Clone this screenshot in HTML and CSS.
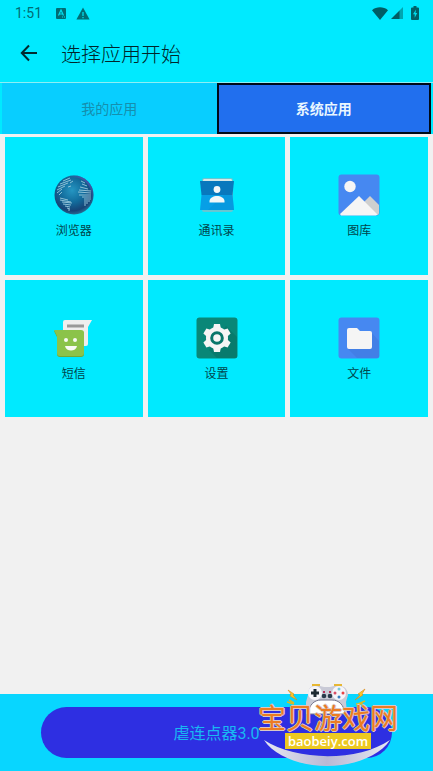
FILE: index.html
```html
<!DOCTYPE html>
<html lang="zh-CN">
<head>
    <meta charset="UTF-8">
    <meta name="viewport" content="width=device-width, initial-scale=1.0">
    <title>选择应用开始</title>
    <link rel="stylesheet" href="styles.css">
</head>
<body>
    <header class="header">
        <div class="status-bar">
            <span class="time">1:51</span>
            <svg class="status-icon" width="12" height="12" viewBox="0 0 12 12">
                <rect x="1" y="1" width="10" height="11" rx="1" fill="#006d75"/>
                <path d="M3.5 8.500L6 3l2.500 5.500M4.300 7h3.400" fill="none" stroke="#00dcec" stroke-width="1.200"/>
                <path d="M7 10h1M9 10h1" stroke="#00dcec"/>
            </svg>
            <svg class="status-icon" width="14" height="13" viewBox="0 0 14 13">
                <path d="M7 0.500L13.600 12.500H0.400z" fill="#006d75"/>
                <path d="M7 5v4M7 10v1.300" stroke="#00dcec" stroke-width="1.300"/>
            </svg>
            <div class="status-right">
                <svg width="16" height="13" viewBox="0 0 16 13">
                    <path d="M0 3.200C4.500-.6 11.500-.6 16 3.200L8 13z" fill="#005d64"/>
                </svg>
                <svg width="12" height="12" viewBox="0 0 12 12">
                    <path d="M12 0v12H8V4z" fill="#00a5b0"/>
                    <path d="M8.500 3.500V12H0z" fill="#005d64"/>
                </svg>
                <svg class="battery" width="8" height="14" viewBox="0 0 8 14">
                    <path d="M2.500 0h3v1.500H7q1 0 1 1V13q0 1-1 1H1q-1 0-1-1V2.500q0-1 1-1h1.500z" fill="#006067"/>
                    <path d="M5 3.500L2 8.300h1.700v3.500L6.200 7H4.500z" fill="#00dcec"/>
                </svg>
            </div>
        </div>
        <div class="toolbar">
            <button class="back-btn" type="button" aria-label="返回">
                <svg width="18" height="18" viewBox="0 0 18 18">
                    <path d="M9 1.500L1.800 9 9 16.500M1.800 9H17" fill="none" stroke="#002b30" stroke-width="2"/>
                </svg>
            </button>
            <h1>选择应用开始</h1>
        </div>
    </header>

    <nav class="tabs">
        <button class="tab" type="button">我的应用</button>
        <button class="tab active" type="button">系统应用</button>
    </nav>

    <main class="apps">
        <button class="app" type="button">
            <svg class="app-icon" viewBox="0 0 42 42">
                <defs>
                    <radialGradient id="globe" cx="0.45" cy="0.38" r="0.62">
                        <stop offset="0" stop-color="#2596c2"/>
                        <stop offset="0.5" stop-color="#126b9b"/>
                        <stop offset="0.85" stop-color="#174476"/>
                        <stop offset="1" stop-color="#266b93"/>
                    </radialGradient>
                    <linearGradient id="globe-edge" x1="0" y1="1" x2="1" y2="0">
                        <stop offset="0.6" stop-color="#15739d" stop-opacity="0"/>
                        <stop offset="1" stop-color="#8149cf"/>
                    </linearGradient>
                </defs>
                <circle cx="21" cy="21" r="19.500" fill="url(#globe)"/>
                <circle cx="21" cy="21" r="18.500" fill="none" stroke="url(#globe-edge)" stroke-width="2"/>
                <g fill="none" stroke="#9bc9dc" stroke-width="0.900">
                    <path d="M10 7l7-3M7 10l11-4M5 13l10-4M4 16l8-4M4 19l5-4M6 21l3-3M17 9l3-2M15 13l3-1"/>
                    <path d="M7 24l8 2M7 26l11 2M9 28l10 1M10 30l8 1M12 32l5 1M14 34l3 1M15 36l2 0"/>
                    <path d="M28 7l4 2M29 10l5 2M27 13l8 2M26 16l12 1M25 18l13 1M26 21l12 0M29 23l9 0M31 25l7 0M31 27l6 0M31 29l4 0M31 31l2 0"/>
                </g>
            </svg>
            <span>浏览器</span>
        </button>
        <button class="app" type="button">
            <svg class="app-icon" viewBox="0 0 42 42">
                <path d="M8 4h27q2 0 2 2v30q0 2-2 2H8q-2 0-2-2V6q0-2 2-2z" fill="#65c7d2"/>
                <path d="M8 5h27q1 0 1 2H7q0-2 1-2z" fill="#d5e8e7"/>
                <path d="M4 7h34l-1.500 14H5.500z" fill="#0878bd"/>
                <path d="M5.500 21h31L38 36H4z" fill="#079fe6"/>
                <path d="M28 21h8.500L38 36H12z" fill="#0793d7" opacity="0.5"/>
                <circle cx="21" cy="15.500" r="3.400" fill="#f3f7f8"/>
                <path d="M13.500 28.500V27c0-3 4-5 7.500-5s7.500 2 7.500 5v1.500z" fill="#f3f7f8"/>
            </svg>
            <span>通讯录</span>
        </button>
        <button class="app" type="button">
            <svg class="app-icon" viewBox="0 0 42 42">
                <rect x="0.500" y="0.500" width="41" height="41" rx="3" fill="#4688f1"/>
                <circle cx="12" cy="12.500" r="5.700" fill="#f5f5f5"/>
                <path d="M20 34l12-12 9 9v8q0 2-2 2H26z" fill="#cfcfcf"/>
                <path d="M2 40l19-18 18.500 18.500-1.500 1H3z" fill="#f5f5f5"/>
            </svg>
            <span>图库</span>
        </button>
        <button class="app" type="button">
            <svg class="app-icon" viewBox="0 0 42 42">
                <path d="M12 3h27l-4 7v17q0 2-2 2H12q-2 0-2-2V5q0-2 2-2z" fill="#eee"/>
                <path d="M14 9h17" stroke="#999" stroke-width="3"/>
                <path d="M1 14h27q3 0 3 3v20q0 3-3 3H7q-3 0-3-3V20z" fill="#70a936"/>
                <path d="M1 13h27q3 0 3 3v20q0 3-3 3H7q-3 0-3-3V19z" fill="#8bc34a"/>
                <circle cx="13" cy="23" r="2" fill="#f8faf5"/>
                <circle cx="22" cy="23" r="2" fill="#f8faf5"/>
                <path d="M12 29h12c-1 6-11 6-12 0z" fill="#f8faf5"/>
            </svg>
            <span>短信</span>
        </button>
        <button class="app" type="button">
            <svg class="app-icon" viewBox="0 0 42 42">
                <rect x="0.500" y="0.500" width="41" height="41" rx="3" fill="#098778"/>
                <path d="M30 9l11 11v19q0 2-2 2H21L13 33z" fill="#087b6d"/>
                <g fill="#f5f5f5">
                    <circle cx="21" cy="21" r="11"/>
                    <path id="tooth" d="M17 12l1-5h6l1 5z"/>
                    <use href="#tooth" transform="rotate(60 21 21)"/>
                    <use href="#tooth" transform="rotate(120 21 21)"/>
                    <use href="#tooth" transform="rotate(180 21 21)"/>
                    <use href="#tooth" transform="rotate(240 21 21)"/>
                    <use href="#tooth" transform="rotate(300 21 21)"/>
                </g>
                <circle cx="21" cy="21" r="5.300" fill="#f5f5f5" stroke="#08766a" stroke-width="3"/>
            </svg>
            <span>设置</span>
        </button>
        <button class="app" type="button">
            <svg class="app-icon" viewBox="0 0 42 42">
                <rect x="0.500" y="0.500" width="41" height="41" rx="3" fill="#4688f1"/>
                <path d="M33 15l8 9v15q0 2-2 2H19L10 32z" fill="#427fe6"/>
                <path d="M11 11h8l3 3h10q2 0 2 2v14q0 2-2 2H11q-2 0-2-2V13q0-2 2-2z" fill="#f5f5f5"/>
            </svg>
            <span>文件</span>
        </button>
    </main>

    <footer class="footer">
        <button class="start-btn" type="button">虐连点器3.0</button>
        <div class="watermark">
            <svg class="watermark-art" viewBox="0 0 140 84">
                <defs>
                    <linearGradient id="smile" x1="0" x2="1">
                        <stop offset="0" stop-color="#e7e8f2"/>
                        <stop offset="0.5" stop-color="#b9b9d5"/>
                        <stop offset="1" stop-color="#e7e8f2"/>
                    </linearGradient>
                </defs>
                <path d="M55 3V1h6v2M77 3V1h6v2" fill="none" stroke="#e7b733" stroke-width="2"/>
                <path d="M55 2h7l4 1h6l4-1h7c5 1 7 5 7 9l-2 7 1 12H48V18l2-7c0-4 1-8 5-9z" fill="#c9cad6"/>
                <path d="M50 30c1-9 6-14 13-14h11c7 0 12 5 13 14z" fill="#fff" stroke="#75758c"/>
                <circle cx="57" cy="9" r="7" fill="#f5f5fa"/>
                <circle cx="81" cy="9" r="7" fill="#f5f5fa"/>
                <path d="M57 5v8M53 9h8" stroke="#1c2932" stroke-width="3"/>
                <circle cx="81" cy="5" r="1.500" fill="#7cc8d7"/>
                <circle cx="85" cy="9" r="1.500" fill="#e84545"/>
                <circle cx="81" cy="13" r="1.500" fill="#397ec1"/>
                <circle cx="77" cy="9" r="1.500" fill="#d94d65"/>
                <path d="M65 8h2M71 8h2" stroke="#b52f57" stroke-width="2"/>
                <circle cx="66" cy="12" r="2.300" fill="#293a4b"/>
                <circle cx="72" cy="12" r="2.300" fill="#293a4b"/>
                <path d="M30 6l6 4-1 1 4 5-7-4 1-2zM107 5l-7 5 2 1-5 5 8-5-1-1z" fill="#ffc527" stroke="#d88618" stroke-width="0.600"/>
                <path d="M29 18l7 2M31 16l5 3M107 17l-7 3M105 20l-7 0" stroke="#d9bb25" stroke-width="1.500"/>
                <path d="M6 56c32 21 94 22 126 0-11 17-38 26-63 26S17 73 6 56z" fill="url(#smile)"/>
            </svg>
            <span class="watermark-name">宝贝游戏网</span>
            <span class="watermark-site">baobeiy.com</span>
        </div>
    </footer>
</body>
</html>
```
FILE: styles.css
```css
* {
    box-sizing: border-box;
}
body {
    margin: 0;
    min-height: 100vh;
    display: flex;
    flex-direction: column;
    background-color: #f1f1f1;
    font-family: Roboto, "Noto Sans CJK SC", sans-serif;
}
button {
    border: none;
    padding: 0;
    font-family: inherit;
    cursor: pointer;
}
svg {
    display: block;
}
.header {
    background-color: #00eaff;
    border-bottom: 1px solid #8eeef5;
}
.status-bar {
    display: flex;
    align-items: center;
    height: 26px;
    padding: 0 14px 0 15px;
    color: #006d75;
    font-size: 14px;
}
.time {
    width: 40px;
}
.status-icon {
    margin-right: 9px;
}
.status-right {
    display: flex;
    align-items: center;
    gap: 3px;
    margin-left: auto;
}
.battery {
    margin-left: 5px;
}
.toolbar {
    display: flex;
    align-items: center;
    height: 56px;
    padding: 0 20px 2px;
}
.back-btn {
    background: none;
    margin-right: 23px;
}
h1 {
    margin: 0;
    color: #00252a;
    font-size: 20px;
    font-weight: 300;
}
.tabs {
    display: flex;
    height: 51px;
    padding: 0 2px;
    background-color: #00eaff;
}
.tab {
    width: 50%;
    background-color: #08ceff;
    color: #158fae;
    font-size: 14px;
    line-height: 20px;
}
.tab.active {
    background-color: #216fee;
    border: 2px solid #000a18;
    color: #eaf7ff;
    font-weight: 700;
}
.apps {
    flex: 1;
    display: grid;
    grid-template-columns: repeat(3, 1fr);
    align-content: start;
    gap: 5px;
    padding: 3px 5px;
}
.app {
    display: flex;
    flex-direction: column;
    align-items: center;
    justify-content: center;
    gap: 6px;
    aspect-ratio: 1;
    padding-top: 2px;
    background-color: #00eaff;
    color: #00454b;
    font-size: 12px;
    line-height: 18px;
}
.app-icon {
    width: 42px;
    height: 42px;
}
.footer {
    position: relative;
    padding: 13px 41px;
    background-color: #08d6ff;
}
.start-btn {
    display: block;
    width: 100%;
    height: 51px;
    padding-bottom: 2px;
    border-radius: 26px;
    background-color: #2e2fe2;
    color: #18b9f2;
    font-size: 16px;
}
.watermark {
    position: absolute;
    right: 35px;
    bottom: 3px;
    width: 140px;
    height: 84px;
    display: flex;
    flex-direction: column;
    align-items: center;
    padding-top: 23px;
    pointer-events: none;
}
.watermark-art {
    position: absolute;
    top: 0;
    left: 0;
    width: 100%;
}
.watermark-name {
    position: relative;
    color: #ec7c22;
    font-size: 28px;
    line-height: 26px;
    white-space: nowrap;
    text-shadow: 1px 0 #d9c7c5, -1px 0 #d9c7c5, 0 1px #d9c7c5, 0 -1px #d9c7c5;
}
.watermark-site {
    position: relative;
    padding: 0 3px;
    background-color: #edc920;
    color: #fff;
    font-family: "Open Sans", sans-serif;
    font-size: 13px;
    font-weight: 600;
    line-height: 16px;
}
```
